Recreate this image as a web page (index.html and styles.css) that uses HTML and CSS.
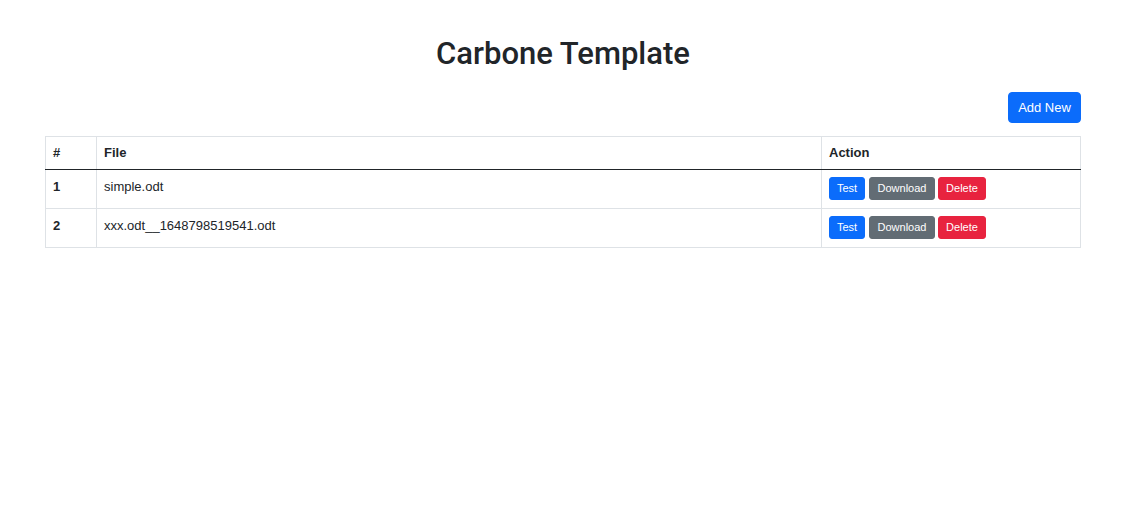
FILE: index.html
```html
<!DOCTYPE html>
<html>
<head>
<meta charset="utf-8">
<link rel="stylesheet" href="styles.css">
</head>
<body>
<div class="page">
  <h1 class="title">Carbone Template</h1>
  <div class="toolbar">
    <button class="btn btn-primary btn-add">Add New</button>
  </div>
  <table class="table">
    <thead>
      <tr>
        <th class="col-num">#</th>
        <th class="col-file">File</th>
        <th class="col-action">Action</th>
      </tr>
    </thead>
    <tbody>
      <tr>
        <th>1</th>
        <td>simple.odt</td>
        <td class="action-cell">
          <div class="actions">
            <button class="btn btn-sm btn-primary btn-test">Test</button>
            <button class="btn btn-sm btn-secondary btn-download">Download</button>
            <button class="btn btn-sm btn-danger btn-delete">Delete</button>
          </div>
        </td>
      </tr>
      <tr>
        <th>2</th>
        <td>xxx.odt__1648798519541.odt</td>
        <td class="action-cell">
          <div class="actions">
            <button class="btn btn-sm btn-primary btn-test">Test</button>
            <button class="btn btn-sm btn-secondary btn-download">Download</button>
            <button class="btn btn-sm btn-danger btn-delete">Delete</button>
          </div>
        </td>
      </tr>
    </tbody>
  </table>
</div>
</body>
</html>
```

FILE: styles.css
```css
*, *::before, *::after {
  box-sizing: border-box;
}
html, body {
  margin: 0;
  padding: 0;
  background: #fff;
}
body {
  font-family: "Liberation Sans", Arial, sans-serif;
  color: #212529;
  font-size: 13px;
}
.page {
  padding: 0 47px 0 45px;
}
.title {
  margin: 0;
  padding-top: 35px;
  text-align: center;
  font-size: 31px;
  font-weight: 500;
  line-height: 38px;
  font-family: Roboto, "Liberation Sans", Arial, sans-serif;
  color: #212529;
}
.toolbar {
  display: flex;
  justify-content: flex-end;
  margin-top: 19px;
  margin-bottom: 13px;
}
.btn {
  font-family: "Liberation Sans", Arial, sans-serif;
  border: 1px solid transparent;
  border-radius: 3px;
  color: #fff;
  cursor: pointer;
  display: inline-block;
  text-align: center;
  white-space: nowrap;
}
.btn-add {
  font-size: 13px;
  line-height: 17px;
  padding: 6px 0;
  border-radius: 4px;
  width: 73px;
  height: 31px;
}
.btn-sm {
  font-size: 11px;
  line-height: 15px;
  padding: 3px 0;
  height: 23px;
}
.btn-primary { background: #0b6cfb; border-color: #0b6cfb; }
.btn-secondary { background: #626c74; border-color: #626c74; }
.btn-danger { background: #e8233f; border-color: #e8233f; }

.actions {
  display: flex;
  gap: 4px;
}
.btn-test { width: 36px; }
.btn-download { width: 66px; }
.btn-delete { width: 48px; margin-left: -1px; }

.table {
  width: 100%;
  border-collapse: collapse;
  border: 1px solid #dee2e6;
}
.table th, .table td {
  text-align: left;
  vertical-align: top;
  padding: 8px 7px;
  border: 1px solid #dee2e6;
  font-size: 13px;
}
.table th { font-weight: bold; }
.table thead th {
  line-height: 16px;
  border-bottom: 1px solid #212529;
}
.table tbody td, .table tbody th {
  line-height: 17px;
  height: 39px;
}
.table tbody td.action-cell {
  padding-top: 7px;
  padding-bottom: 7px;
}
.col-num { width: 51px; }
.col-action { width: 259px; }
```
